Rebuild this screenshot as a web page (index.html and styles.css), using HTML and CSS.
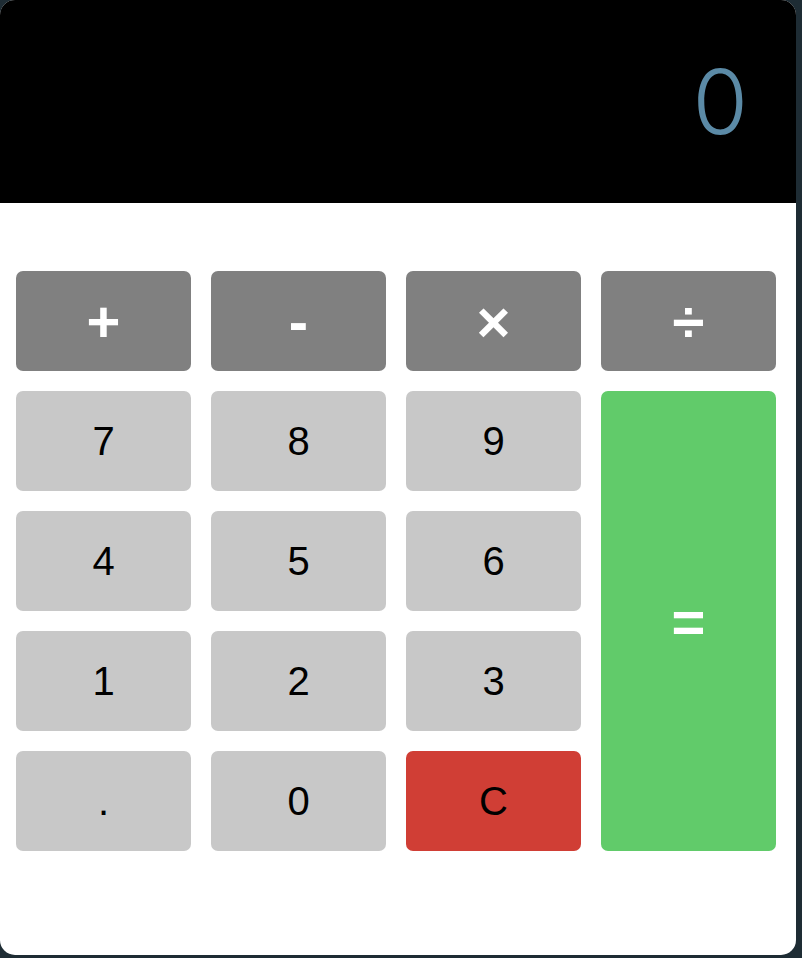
FILE: index.html
```html
<!DOCTYPE html>
<html lang="en">
<head>
    <meta charset="UTF-8">
    <meta name="viewport" content="width=device-width, initial-scale=1.0">
    <title>Calculator</title>
    <link rel="stylesheet" href="styles.css">
</head>
<body>
    <div class="calculator">
        <div class="display" id="display">0</div>
        <div class="keys">
            <button class="key op">+</button>
            <button class="key op">-</button>
            <button class="key op">&times;</button>
            <button class="key op">&divide;</button>

            <button class="key">7</button>
            <button class="key">8</button>
            <button class="key">9</button>
            <button class="key equals">=</button>

            <button class="key">4</button>
            <button class="key">5</button>
            <button class="key">6</button>

            <button class="key">1</button>
            <button class="key">2</button>
            <button class="key">3</button>

            <button class="key">.</button>
            <button class="key">0</button>
            <button class="key clear">C</button>
        </div>
    </div>
</body>
</html>
```

FILE: styles.css
```css
body {
    margin: 0;
    background-color: #1e2c34;
    font-family: "Liberation Sans", Arial, sans-serif;
}
.calculator {
    width: 796px;
    height: 955px;
    background-color: #fff;
    border-radius: 15px;
    overflow: hidden;
}
.display {
    height: 203px;
    background-color: #000;
    color: #5b8aa6;
    font-family: Inter, "Liberation Sans", sans-serif;
    font-weight: 300;
    font-size: 90px;
    line-height: 203px;
    text-align: right;
    padding-right: 48px;
}
.keys {
    display: grid;
    grid-template-columns: repeat(4, 175px);
    grid-auto-rows: 100px;
    gap: 20px;
    padding: 68px 20px 0 16px;
}
.key {
    border: none;
    border-radius: 7px;
    background-color: #c8c8c8;
    color: #000;
    font-family: "Liberation Sans", Arial, sans-serif;
    font-size: 40px;
    padding: 0;
    cursor: pointer;
}
.op {
    background-color: #808080;
    color: #fff;
    font-size: 58px;
    font-weight: bold;
}
.equals {
    grid-column: 4;
    grid-row: 2 / span 4;
    background-color: #61cb6a;
    color: #fff;
    font-size: 58px;
    font-weight: bold;
}
.clear {
    background-color: #d03e35;
}
```
